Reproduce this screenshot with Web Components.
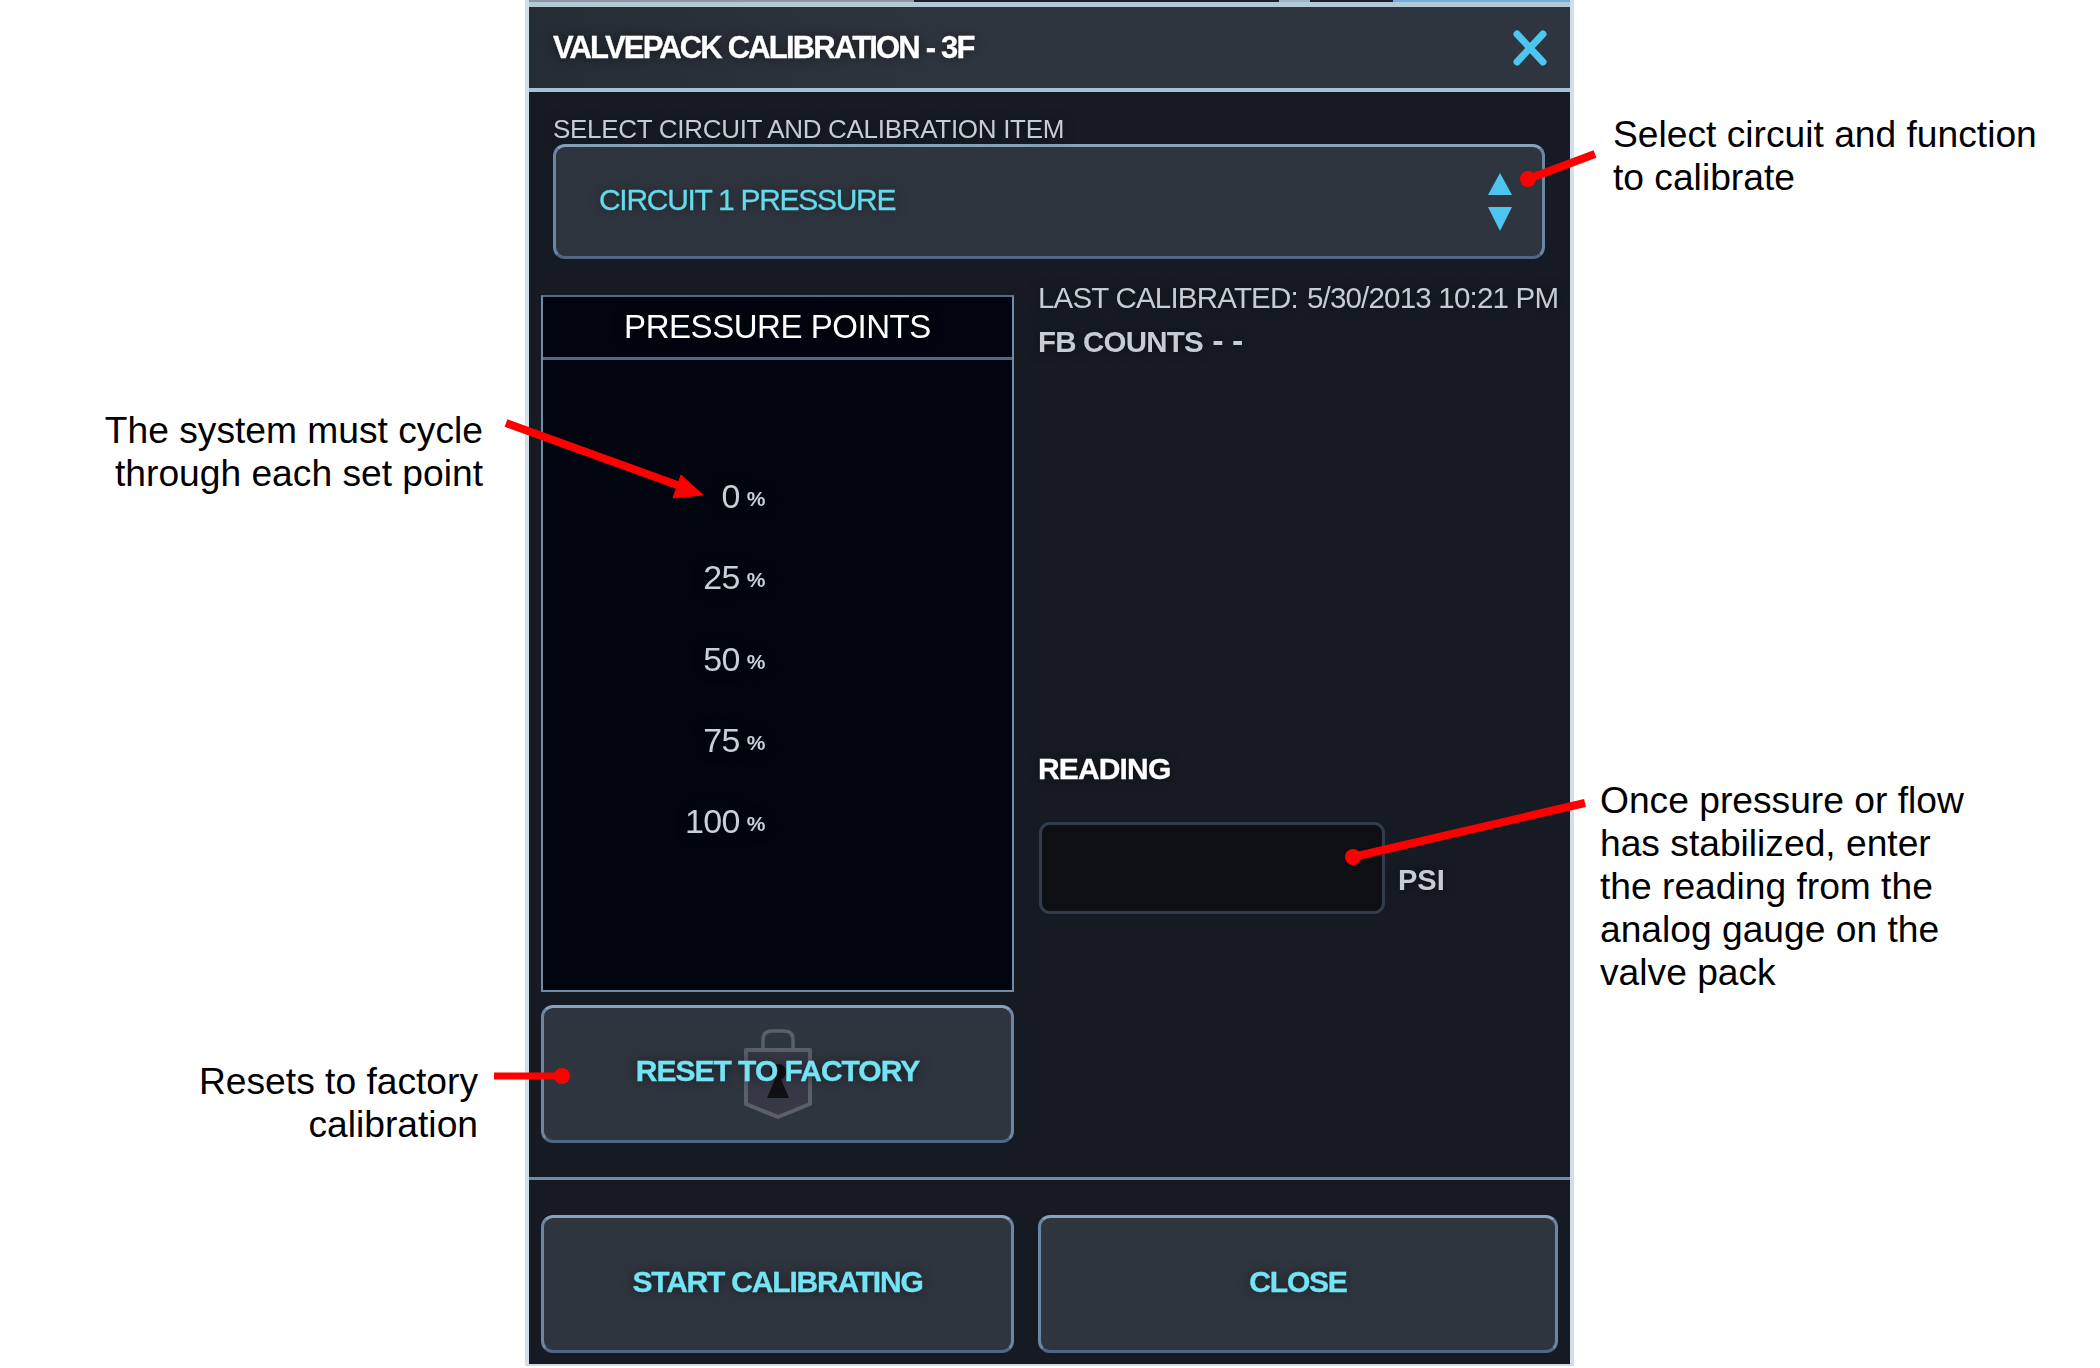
<!DOCTYPE html>
<html>
<head>
<meta charset="utf-8">
<title>Valvepack calibration</title>
<style>
  html, body { margin: 0; background: #fff; }
  body { width: 2100px; height: 1368px; position: relative; overflow: hidden; font-family: "Liberation Sans", Arial, sans-serif; }
</style>
</head>
<body>
<vp-dialog>
  <span slot="title">VALVEPACK CALIBRATION - 3F</span>
  <vp-select label="SELECT CIRCUIT AND CALIBRATION ITEM" value="CIRCUIT 1 PRESSURE"></vp-select>
  <vp-body>
    <vp-points slot="left" heading="PRESSURE POINTS" points="0,25,50,75,100"></vp-points>
    <vp-button slot="left" lock>RESET TO FACTORY</vp-button>
    <vp-reading slot="right" calibrated="5/30/2013 10:21 PM" unit="PSI"></vp-reading>
  </vp-body>
  <vp-button slot="foot">START CALIBRATING</vp-button>
  <vp-button slot="foot">CLOSE</vp-button>
</vp-dialog>

<vp-note style="left:102px;top:409px;width:381px;text-align:right">The system must cycle<br>through each set point</vp-note>
<vp-note style="left:110px;top:1060px;width:368px;text-align:right">Resets to factory<br>calibration</vp-note>
<vp-note style="left:1613px;top:113px;width:470px">Select circuit and function<br>to calibrate</vp-note>
<vp-note style="left:1600px;top:779px;width:450px">Once pressure or flow<br>has stabilized, enter<br>the reading from the<br>analog gauge on the<br>valve pack</vp-note>
<vp-arrows></vp-arrows>

<script>
const edgeBorder = `
  border: 3px solid #6b86a3;
  border-top-color: #86a4bf;
  border-bottom-color: #4f6785;
  border-radius: 12px;
  background: #2f353f;
`;
const uiText = `text-shadow: 0 0 12px rgba(0,0,0,.6); filter: blur(.4px);`;

class VpDialog extends HTMLElement {
  constructor() {
    super();
    this.attachShadow({ mode: 'open' }).innerHTML = `
      <style>
        :host { display: block; width: 1049px; height: 1366px; margin-left: 525px; box-sizing: border-box;
          border-left: 4px solid #cfe0ea; border-right: 4px solid #cfe0ea; border-bottom: 2px solid #cfd9e0; background: #161b23; }
        .strip { height: 7px; box-sizing: border-box; border-bottom: 5px solid #b2c9d7;
          background: linear-gradient(90deg, #8b98a2 0 37%, #1a2028 37% 72%, #9fb4c2 72% 75%, #1a2028 75% 83%, #6fb0dc 83% 100%); }
        header { height: 85px; box-sizing: border-box; border-bottom: 4px solid #a6c2d6;
          background: linear-gradient(90deg, #262c34, #2f353f 40%);
          display: flex; align-items: center; justify-content: space-between; padding: 0 22px 0 24px; }
        .title { color: #fff; font: bold 31px "Liberation Sans", sans-serif; letter-spacing: -1.82px; -webkit-text-stroke: .3px #fff; ${uiText} }
        svg { display: block; }
        .main { height: 1088px; box-sizing: border-box; border-bottom: 3px solid #6f8ba6; }
        footer { display: grid; grid-template-columns: 473px 520px; column-gap: 24px; padding: 35px 0 0 12px; }
        footer ::slotted(vp-button) { height: 138px; }
      </style>
      <div class="strip"></div>
      <header>
        <div class="title"><slot name="title"></slot></div>
        <svg width="36" height="36" viewBox="0 0 36 36"><path d="M5 4 L31 32 M31 4 L5 32" stroke="#4cc6ef" stroke-width="7" stroke-linecap="round"/></svg>
      </header>
      <div class="main"><slot></slot></div>
      <footer><slot name="foot"></slot></footer>
    `;
  }
}

class VpSelect extends HTMLElement {
  constructor() {
    super();
    this.attachShadow({ mode: 'open' }).innerHTML = `
      <style>
        :host { display: block; padding: 22px 0 0 24px; }
        .label { color: #c6ccd4; font: 26px/30px "Liberation Sans", sans-serif; letter-spacing: -.3px; height: 30px; white-space: nowrap; ${uiText} }
        .box { width: 992px; height: 115px; box-sizing: border-box; ${edgeBorder} display: flex; align-items: center; justify-content: space-between; padding: 0 30px 0 43px; }
        .value { color: #63dbea; font: 30px "Liberation Sans", sans-serif; letter-spacing: -1.3px; -webkit-text-stroke: .3px #63dbea; padding-bottom: 3px; ${uiText} }
      </style>
      <div class="label"></div>
      <div class="box">
        <div class="value"></div>
        <svg width="24" height="58" viewBox="0 0 24 58"><path d="M12 0 L24 22 L0 22 Z M0 34 L24 34 L12 58 Z" fill="#4cc6ef"/></svg>
      </div>
    `;
    this.shadowRoot.querySelector('.label').textContent = this.getAttribute('label');
    this.shadowRoot.querySelector('.value').textContent = this.getAttribute('value');
  }
}

class VpBody extends HTMLElement {
  constructor() {
    super();
    this.attachShadow({ mode: 'open' }).innerHTML = `
      <style>
        :host { display: grid; grid-template-columns: 473px 1fr; column-gap: 24px; padding: 36px 13px 0 12px; }
        .left { display: flex; flex-direction: column; gap: 13px; }
        ::slotted(vp-button) { height: 138px; }
      </style>
      <div class="left"><slot name="left"></slot></div>
      <div><slot name="right"></slot></div>
    `;
  }
}

class VpPoints extends HTMLElement {
  constructor() {
    super();
    const rows = this.getAttribute('points').split(',').map(p => `<div class="row"><span class="n">${p}</span><span class="pct">%</span></div>`).join('');
    this.attachShadow({ mode: 'open' }).innerHTML = `
      <style>
        :host { display: block; height: 697px; box-sizing: border-box; border: 2px solid #6f8ba6; border-top-color: #56687d; background: #01050f; }
        h2 { margin: 0; height: 63px; box-sizing: border-box; border-bottom: 3px solid #56687d; color: #fff; text-align: center;
          font: 33px/60px "Liberation Sans", sans-serif; letter-spacing: -.45px; ${uiText} }
        .rows { padding: 96px 247px 0 0; }
        .row { height: 81.25px; display: flex; justify-content: flex-end; align-items: baseline; gap: 7px; color: #c8d0dc; line-height: 81px; ${uiText} }
        .n { font: 34px/81px "Liberation Sans", sans-serif; letter-spacing: -.6px; }
        .pct { font: bold 21px/81px "Liberation Sans", sans-serif; letter-spacing: -.5px; transform: translateY(-2px); }
      </style>
      <h2></h2>
      <div class="rows">${rows}</div>
    `;
    this.shadowRoot.querySelector('h2').textContent = this.getAttribute('heading');
  }
}

class VpButton extends HTMLElement {
  constructor() {
    super();
    const lock = this.hasAttribute('lock') ? `
      <svg class="lock" width="70" height="92" viewBox="0 0 70 92">
        <path d="M20 22 V12 Q20 3 29 3 H41 Q50 3 50 12 V22" fill="none" stroke="#5b5f6c" stroke-width="3.5"/>
        <path d="M3 22 H67 V76 L35 89 L3 76 Z" fill="#363845" stroke="#5b5f6c" stroke-width="4" stroke-linejoin="round"/>
        <circle cx="35" cy="44" r="8" fill="#101014"/>
        <path d="M35 44 L46 70 H24 Z" fill="#101014"/>
      </svg>` : '';
    this.attachShadow({ mode: 'open' }).innerHTML = `
      <style>
        :host { display: block; box-sizing: border-box; ${edgeBorder} position: relative; }
        .in { height: 100%; display: flex; align-items: center; justify-content: center; padding-bottom: 4px; box-sizing: border-box;
          color: #74e4f5; font: bold 30px "Liberation Sans", sans-serif; letter-spacing: -1.2px; -webkit-text-stroke: .3px #74e4f5; ${uiText} position: relative; }
        :host([lock]) .in { letter-spacing: -1px; padding-bottom: 6px; }
        .lock { position: absolute; left: 50%; top: 20px; margin-left: -35px; }
      </style>
      ${lock}
      <div class="in"><slot></slot></div>
    `;
  }
}

class VpReading extends HTMLElement {
  constructor() {
    super();
    this.attachShadow({ mode: 'open' }).innerHTML = `
      <style>
        :host { display: block; color: #c6ccd4; }
        .cal { font: 29.5px/30px "Liberation Sans", sans-serif; letter-spacing: -.8px; margin-top: -12px; white-space: nowrap; ${uiText} }
        .cal span { margin-left: 9px; }
        .fb { font: bold 29.5px/30px "Liberation Sans", sans-serif; letter-spacing: -.8px; margin-top: 14px; white-space: nowrap; ${uiText} }
        .fb span { font-size: 34px; line-height: 0; letter-spacing: -.5px; margin-left: 2px; }
        .rd { font: bold 30px/30px "Liberation Sans", sans-serif; letter-spacing: -.85px; color: #fff; margin-top: 397px; -webkit-text-stroke: .3px #fff; ${uiText} }
        .entry { display: flex; align-items: flex-end; gap: 13px; margin: 38px 0 0 1px; }
        .input { width: 346px; height: 92px; box-sizing: border-box; background: #0d0f12; border: 3px solid #323c4b; border-radius: 11px; }
        .unit { font: bold 29px/30px "Liberation Sans", sans-serif; letter-spacing: 0; padding-bottom: 19px; ${uiText} }
      </style>
      <div class="cal">LAST CALIBRATED:<span></span></div>
      <div class="fb">FB COUNTS <span>- -</span></div>
      <div class="rd">READING</div>
      <div class="entry"><div class="input"></div><div class="unit"></div></div>
    `;
    this.shadowRoot.querySelector('.cal span').textContent = this.getAttribute('calibrated');
    this.shadowRoot.querySelector('.unit').textContent = this.getAttribute('unit');
  }
}

// callout text beside the screenshot
class VpNote extends HTMLElement {
  constructor() {
    super();
    this.attachShadow({ mode: 'open' }).innerHTML = `
      <style>
        :host { display: block; position: absolute; color: #000; font: 37.2px/43px "Liberation Sans", sans-serif; white-space: nowrap; }
      </style>
      <slot></slot>
    `;
  }
}

class VpArrows extends HTMLElement {
  constructor() {
    super();
    this.attachShadow({ mode: 'open' }).innerHTML = `
      <style>
        :host { display: block; position: absolute; left: 0; top: 0; width: 2100px; height: 1368px; pointer-events: none; }
      </style>
      <svg width="2100" height="1368" viewBox="0 0 2100 1368">
        <g fill="#f00" stroke="#f00">
          <path d="M506 423 L680 486" stroke-width="8" fill="none"/>
          <path d="M703 495 L681 475 L673 498 Z" stroke-width="1"/>
          <path d="M1595 154 L1528 179" stroke-width="8" fill="none"/>
          <circle cx="1528" cy="179" r="8" stroke="none"/>
          <path d="M494 1076 L562 1076" stroke-width="7" fill="none"/>
          <circle cx="562" cy="1076" r="8" stroke="none"/>
          <path d="M1585 803 L1353 857" stroke-width="8" fill="none"/>
          <circle cx="1353" cy="857" r="8" stroke="none"/>
        </g>
      </svg>
    `;
  }
}

customElements.define('vp-dialog', VpDialog);
customElements.define('vp-select', VpSelect);
customElements.define('vp-body', VpBody);
customElements.define('vp-points', VpPoints);
customElements.define('vp-button', VpButton);
customElements.define('vp-reading', VpReading);
customElements.define('vp-note', VpNote);
customElements.define('vp-arrows', VpArrows);
</script>
</body>
</html>
